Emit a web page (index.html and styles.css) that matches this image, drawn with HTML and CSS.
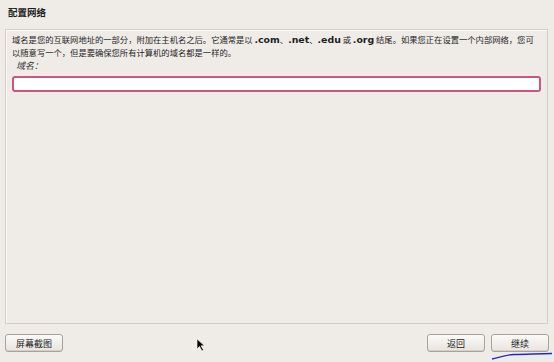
FILE: index.html
```html
<!DOCTYPE html>
<html lang="zh-cn">
<head>
<meta charset="utf-8" />
<title>配置网络</title>
<link rel="stylesheet" href="styles.css">
</head>
<body>
<div class="page">
	<h1 class="title">配置网络</h1>
	<!-- S 内容 -->
	<div class="panel">
		<p class="desc">域名是您的互联网地址的一部分，附加在主机名之后。它通常是以 <b>.com</b>、<b>.net</b>、<b>.edu</b> 或 <b>.org</b> 结尾。如果您正在设置一个内部网络，您可<br />以随意写一个，但是要确保您所有计算机的域名都是一样的。</p>
		<p class="label">域名：</p>
		<div class="field"><input type="text" class="ipt" /></div>
	</div>
	<!-- E 内容 -->
	<!-- S 按钮 -->
	<div class="bar">
		<button class="bt">屏幕截图</button>
		<span class="cursor"><svg width="10" height="14" viewBox="0 0 10 14"><path d="M1 1 L1 11 L3.5 8.5 L6 13 L7.5 12 L5 7.8 L8.5 7.8 Z" fill="#000" stroke="#fff" stroke-width="0.6"/></svg></span>
		<div class="bar_r">
			<button class="bt">返回</button>
			<button class="bt">继续</button>
		</div>
		<svg class="scribble" width="66" height="10" viewBox="0 0 66 10"><path d="M4 8 C10 7 16 4 26 3.5 C38 3 50 3 64 2.5" fill="none" stroke="#1a2bd6" stroke-width="1.3"/></svg>
	</div>
	<!-- E 按钮 -->
</div>
</body>
</html>
```

FILE: styles.css
```css
html,body{margin:0;padding:0;}
body{background:#EFECE8;font-family:"Noto Sans CJK SC","DejaVu Sans",sans-serif;color:#1e1e1e;}
.page{display:flex;flex-direction:column;width:554px;height:362px;box-sizing:border-box;padding:0 6px 0 5px;}
.title{margin:5px 0 0 3px;height:24px;font-size:9.5px;line-height:14px;font-weight:bold;}
/* S 面板 */
.panel{flex:1;border:1px solid #D3CDC6;box-shadow:inset 1px 1px 0 #FBFAF8;padding:3px 6px 0 6px;}
.panel p{margin:0;}
.desc{font-size:8.3px;line-height:13px;white-space:nowrap;}
.desc b{font-family:"DejaVu Sans",sans-serif;font-size:9.4px;}
.label{padding-left:4px;font-size:9px;line-height:13px;font-style:italic;color:#333;}
.field{margin-top:4px;}
.ipt{display:block;width:100%;box-sizing:border-box;height:16px;border:2px solid #C75883;border-radius:3px;background:#FFFFFF;padding:0;outline:none;}
/* E 面板 */
/* S 按钮条 */
.bar{position:relative;display:flex;align-items:center;height:38px;}
.bar_r{display:flex;gap:6px;margin-left:auto;margin-right:-1px;}
.bt{width:58px;height:18px;padding:0;border:1px solid #A8A29A;border-radius:3px;background:linear-gradient(#FBFAF8,#E8E4DF);font-family:"Noto Sans CJK SC",sans-serif;font-size:9px;color:#222;box-shadow:inset 0 -1px 0 #D6D0C9;}
.cursor{position:absolute;left:191px;top:9px;}
.scribble{position:absolute;right:-6px;top:27px;}
/* E 按钮条 */
```
